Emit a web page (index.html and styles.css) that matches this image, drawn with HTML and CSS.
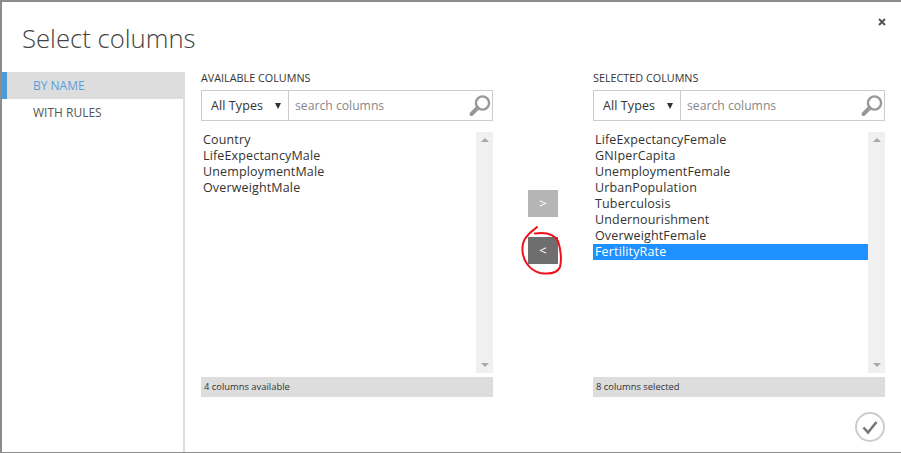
FILE: index.html
```html
<!DOCTYPE html>
<html lang="en">
<head>
<meta charset="utf-8">
<title>Select columns</title>
<link rel="stylesheet" href="styles.css">
</head>
<body>
<div class="dialog">
  <header class="head">
    <h1 class="title">Select columns</h1>
    <svg class="close" width="8" height="8" viewBox="0 0 8 8"><path d="M1 1l6 6M7 1L1 7" stroke="#555" stroke-width="2"/></svg>
  </header>
  <div class="body">
    <nav class="side">
      <div class="tab active">BY NAME</div>
      <div class="tab">WITH RULES</div>
    </nav>
    <main class="main">
      <section class="col">
        <div class="label">AVAILABLE COLUMNS</div>
        <div class="tools">
          <div class="types"><span>All Types</span><i class="caret"></i></div>
          <div class="search"><span>search columns</span>
            <svg class="mag" width="24" height="24" viewBox="0 0 24 24"><circle cx="14.5" cy="9" r="6.6" fill="none" stroke="#999" stroke-width="2.4"/><path d="M9.5 14L3.5 20" stroke="#999" stroke-width="4" stroke-linecap="round"/></svg>
          </div>
        </div>
        <div class="list">
          <div class="items">
            <div class="item">Country</div>
            <div class="item">LifeExpectancyMale</div>
            <div class="item">UnemploymentMale</div>
            <div class="item">OverweightMale</div>
          </div>
          <div class="scroll"><i class="up"></i><i class="down"></i></div>
        </div>
        <div class="status">4 columns available</div>
      </section>
      <div class="move">
        <div class="btn light">&gt;</div>
        <div class="btn dark">&lt;
          <svg class="ring" width="42" height="56" viewBox="0 0 42 56"><path d="M16 3C13 6 9 8 7 11C3 15 1 20 1.5 27C2 36 8 46 19 49C26 50 36 50 39 43C41 36 39.5 24 37 17C33 10 24 8 14 9.5" fill="none" stroke="#f0101a" stroke-width="2" stroke-linecap="round"/></svg>
        </div>
      </div>
      <section class="col">
        <div class="label">SELECTED COLUMNS</div>
        <div class="tools">
          <div class="types"><span>All Types</span><i class="caret"></i></div>
          <div class="search"><span>search columns</span>
            <svg class="mag" width="24" height="24" viewBox="0 0 24 24"><circle cx="14.5" cy="9" r="6.6" fill="none" stroke="#999" stroke-width="2.4"/><path d="M9.5 14L3.5 20" stroke="#999" stroke-width="4" stroke-linecap="round"/></svg>
          </div>
        </div>
        <div class="list">
          <div class="items">
            <div class="item">LifeExpectancyFemale</div>
            <div class="item">GNIperCapita</div>
            <div class="item">UnemploymentFemale</div>
            <div class="item">UrbanPopulation</div>
            <div class="item">Tuberculosis</div>
            <div class="item">Undernourishment</div>
            <div class="item">OverweightFemale</div>
            <div class="item selected">FertilityRate</div>
          </div>
          <div class="scroll"><i class="up"></i><i class="down"></i></div>
        </div>
        <div class="status">8 columns selected</div>
      </section>
      <svg class="ok" width="30" height="30" viewBox="0 0 30 30"><circle cx="15" cy="15" r="14" fill="#fff" stroke="#ccc" stroke-width="2"/><path d="M8.5 15.5l4.5 5L21.5 10" fill="none" stroke="#777" stroke-width="2.6"/></svg>
    </main>
  </div>
</div>
</body>
</html>
```
FILE: styles.css
```css
* { box-sizing: border-box; }
html, body { margin: 0; height: 100%; }
body {
  width: 901px;
  height: 453px;
  overflow: hidden;
  background: #fff;
  font-family: "Open Sans", "Noto Sans", sans-serif;
  color: #333;
}
.dialog {
  width: 901px;
  height: 453px;
  border-top: 2px solid #8c8c8c;
  border-left: 2px solid #8c8c8c;
  border-bottom: 1px solid #8c8c8c;
  display: flex;
  flex-direction: column;
  background: #fff;
}
.head {
  height: 70px;
  flex: none;
  position: relative;
  padding: 19px 0 0 20px;
}
.title {
  margin: 0;
  font-size: 25.7px;
  line-height: 36px;
  font-weight: 300;
  color: #444;
}
.close { position: absolute; left: 876px; top: 16px; }
.body { flex: 1; display: flex; min-height: 0; }
.side {
  width: 183px;
  flex: none;
  border-right: 2px solid #ddd;
}
.tab {
  height: 27px;
  padding-left: 31px;
  font-size: 12px;
  line-height: 27px;
  font-weight: 500;
  color: #555;
}
.tab.active {
  background: #ddd;
  color: #5a9fdc;
  border-left: 5px solid #4b9bdb;
  padding-left: 26px;
}
.main {
  flex: 1;
  position: relative;
  display: flex;
  padding-left: 16px;
}
.col { width: 292px; flex: none; }
.label {
  height: 18px;
  font-size: 10.8px;
  line-height: 12px;
  color: #333;
}
.tools { display: flex; height: 31px; }
.types {
  width: 88px;
  border: 1px solid #ccc;
  display: flex;
  align-items: center;
  justify-content: space-between;
  padding: 0 7px 0 9px;
  font-size: 12.5px;
  letter-spacing: 0.1px;
  color: #333;
}
.caret {
  width: 0; height: 0;
  border-left: 3.5px solid transparent;
  border-right: 3.5px solid transparent;
  border-top: 6px solid #333;
}
.search {
  flex: 1;
  border: 1px solid #ccc;
  border-left: 0;
  display: flex;
  align-items: center;
  justify-content: space-between;
  padding: 0 0 0 6px;
  font-size: 12.2px;
  color: #888;
}
.list {
  display: flex;
  height: 241px;
  margin-top: 11px;
  font-size: 12.5px;
  letter-spacing: 0.15px;
}
.items { flex: 1; }
.item {
  height: 16px;
  line-height: 16px;
  padding-left: 2px;
  color: #333;
}
.item.selected { background: #1e90ff; color: #fff; }
.scroll {
  width: 17px;
  flex: none;
  background: #f0f0f0;
  display: flex;
  flex-direction: column;
  justify-content: space-between;
  align-items: center;
  padding: 6px 0;
}
.up, .down {
  width: 0; height: 0;
  border-left: 4px solid transparent;
  border-right: 4px solid transparent;
}
.up { border-bottom: 4px solid #a8a8a8; }
.down { border-top: 4px solid #a8a8a8; }
.status {
  height: 20px;
  margin-top: 4px;
  background: #ddd;
  font-size: 9.4px;
  line-height: 20px;
  padding-left: 3px;
  color: #333;
}
.move {
  width: 100px;
  flex: none;
  display: flex;
  flex-direction: column;
  align-items: center;
  gap: 20px;
  padding-top: 118px;
}
.btn {
  width: 30px;
  height: 27px;
  text-align: center;
  font-size: 13px;
  line-height: 27px;
  color: #fff;
  position: relative;
}
.btn.light { background: #b5b5b5; }
.btn.dark { background: #6e6e6e; }
.ring { position: absolute; left: -7px; top: -13px; }
.ok { position: absolute; left: 670px; top: 340px; }
```
